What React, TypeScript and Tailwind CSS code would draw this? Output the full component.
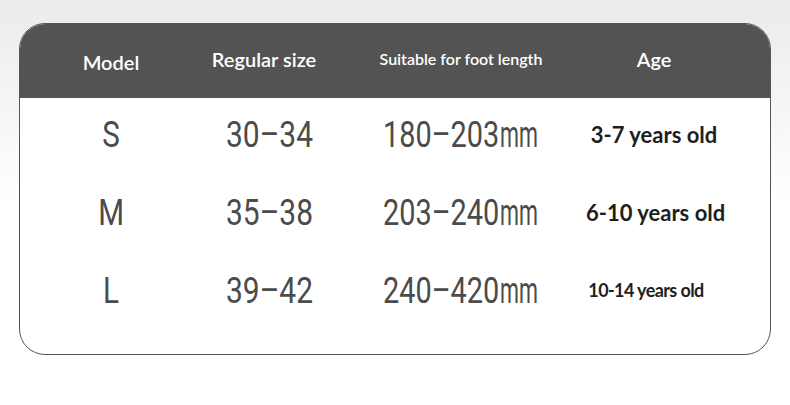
const rows = [
  { model: 'S', size: '30–34', foot: '180–203', age: '3-7 years old', ageClass: 'text-[22px]' },
  { model: 'M', size: '35–38', foot: '203–240', age: '6-10 years old', ageClass: 'text-[22px]' },
  { model: 'L', size: '39–42', foot: '240–420', age: '10-14 years old', ageClass: 'ml-[-16px] text-[18px] tracking-[-0.6px]' },
]

const gridCols = 'grid grid-cols-[182px_134px_250px_136px]'
const numFont = "font-['Roboto',sans-serif] leading-none text-[#4b4b4b]"

export default function App() {
  return (
    <div className="h-[405px] w-[790px] bg-gradient-to-b from-[#ebebeb] via-white to-white pt-[23px] pl-[19px] font-['Lato','Noto_Sans',sans-serif]">
      <div className="h-[332px] w-[752px] overflow-hidden rounded-[26px] border border-[#555] bg-white">
        <div className={`${gridCols} h-[74px] items-center bg-[#535353] text-white`}>
          <div className="mt-[2px] text-center text-[20px] font-semibold">Model</div>
          <div className="-mt-[4px] mr-[10px] text-center text-[20px] font-semibold">Regular size</div>
          <div className="-mt-[4px] text-center text-[16px] font-semibold">Suitable for foot length</div>
          <div className="-mt-[4px] text-center text-[20px] font-semibold">Age</div>
        </div>
        <div className="-mt-[3px]">
          {rows.map((r) => (
            <div key={r.model} className={`${gridCols} h-[78px] items-center`}>
              <div className={`text-center text-[37px] ${numFont}`}>
                <span className="inline-block scale-x-[0.8]">{r.model}</span>
              </div>
              <div className={`flex justify-center text-[37px] ${numFont}`}>
                <span className="inline-block w-[87px] whitespace-nowrap">
                  <span className="inline-block origin-left scale-x-[0.81]">{r.size}</span>
                </span>
              </div>
              <div className={`flex items-baseline justify-center ${numFont}`}>
                <span className="inline-block w-[117px] whitespace-nowrap text-[37px]">
                  <span className="inline-block origin-left scale-x-[0.78]">{r.foot}</span>
                </span>
                <span className="inline-block w-[40px] whitespace-nowrap text-[36px]">
                  <span className="inline-block origin-left scale-x-[0.6]">mm</span>
                </span>
              </div>
              <div className={`whitespace-nowrap text-center font-bold text-[#1e1e1e] ${r.ageClass}`}>{r.age}</div>
            </div>
          ))}
        </div>
      </div>
    </div>
  )
}
